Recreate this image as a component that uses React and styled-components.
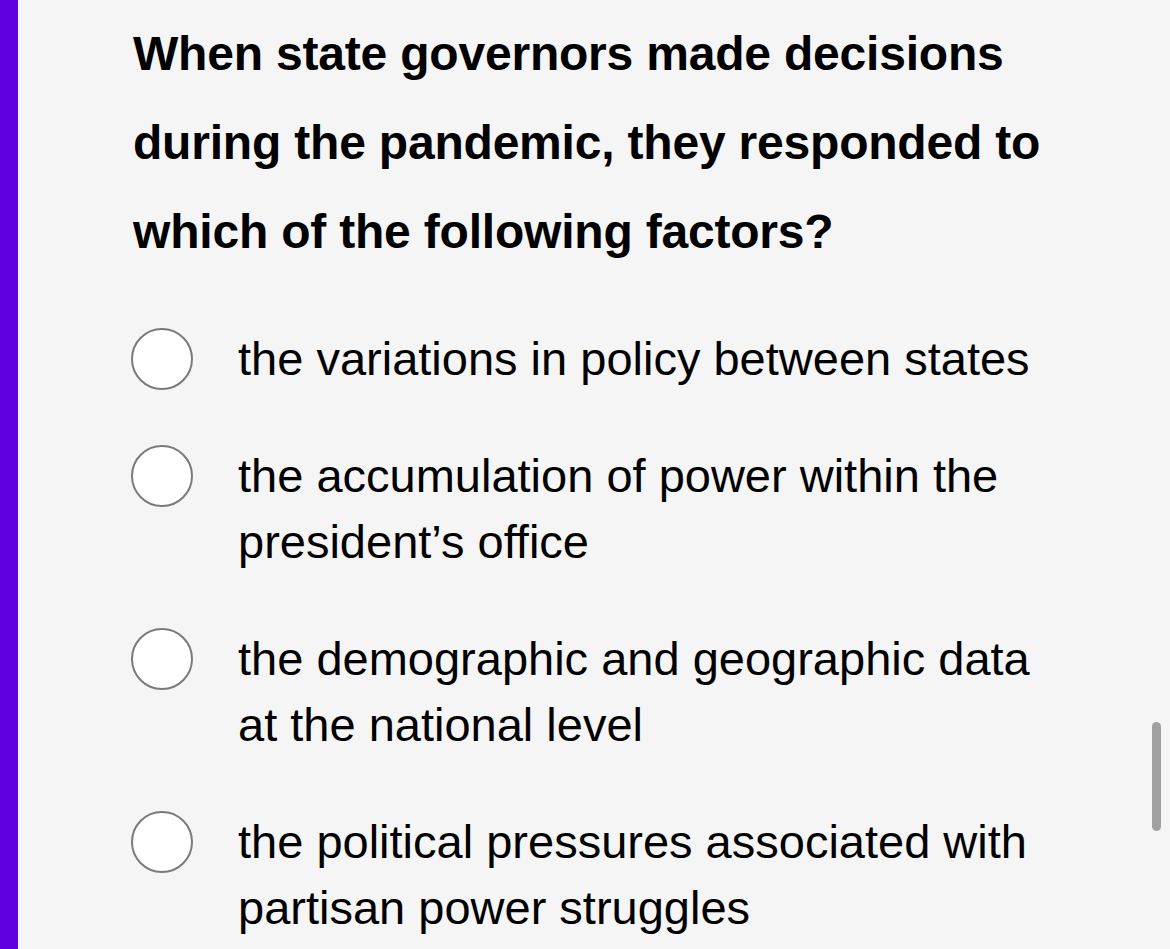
import React from "react";
import styled, { createGlobalStyle } from "styled-components";

const GlobalStyle = createGlobalStyle`
  html, body {
    margin: 0;
    padding: 0;
    background: #f5f5f5;
  }
  body {
    font-family: "Liberation Sans", Arial, sans-serif;
    color: #000;
  }
`;

const Page = styled.div`
  display: flex;
  height: 949px;
  overflow: hidden;
  background: #f5f5f5;
`;

const SideBar = styled.div`
  width: 18px;
  flex-shrink: 0;
  background: #6000e0;
`;

const Content = styled.div`
  flex: 1;
  padding: 9px 0 0 115px;
  position: relative;
`;

const Question = styled.h1`
  margin: 0;
  font-size: 48px;
  font-weight: 700;
  line-height: 89px;
  letter-spacing: -0.2px;
  width: 940px;
`;

const OptionList = styled.div`
  display: flex;
  flex-direction: column;
  gap: 51px;
  margin-top: 50px;
`;

const Option = styled.label`
  display: flex;
  align-items: flex-start;
  cursor: pointer;
`;

const Radio = styled.span`
  width: 58px;
  height: 58px;
  margin: 2px 45px 0 -2px;
  border-radius: 50%;
  border: 2px solid #7a7a7a;
  background: #ffffff;
  flex-shrink: 0;
`;

const OptionText = styled.span`
  font-size: 47px;
  line-height: 66px;
  width: 820px;
`;

const ScrollThumb = styled.div`
  position: absolute;
  right: 9px;
  top: 722px;
  width: 9px;
  height: 109px;
  border-radius: 5px;
  background: #a0a0a0;
`;

const options = [
  "the variations in policy between states",
  "the accumulation of power within the president\u2019s office",
  "the demographic and geographic data at the national level",
  "the political pressures associated with partisan power struggles",
];

export default function App() {
  return (
    <>
      <GlobalStyle />
      <Page>
        <SideBar />
        <Content>
          <Question>
            When state governors made decisions during the pandemic, they
            responded to which of the following factors?
          </Question>
          <OptionList>
            {options.map((text) => (
              <Option key={text}>
                <Radio />
                <OptionText>{text}</OptionText>
              </Option>
            ))}
          </OptionList>
          <ScrollThumb />
        </Content>
      </Page>
    </>
  );
}
